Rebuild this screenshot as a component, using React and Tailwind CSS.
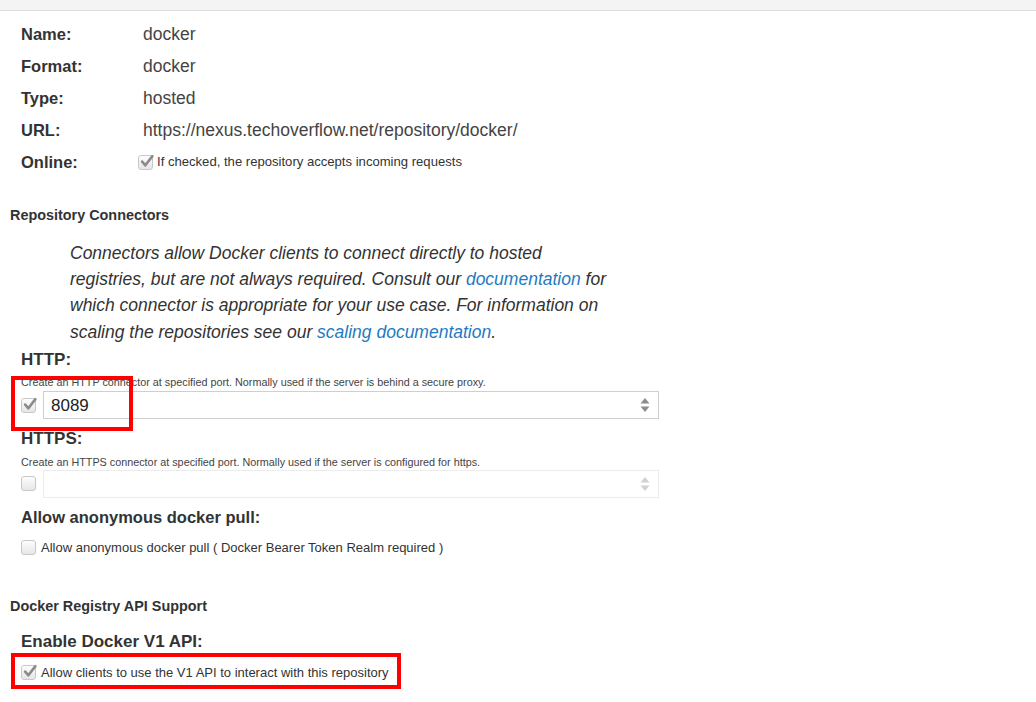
import React from "react";

const font = { fontFamily: '"Liberation Sans", Arial, sans-serif' };

function Check({ checked, faded }) {
  return (
    <span
      className={`relative inline-flex h-[15px] w-[15px] shrink-0 items-center justify-center rounded-[3px] border border-[#c8c8c8] bg-gradient-to-b from-[#fdfdfd] to-[#e6e6e6] ${faded ? "opacity-80" : ""}`}
    >
      {checked && (
        <svg width="14" height="14" viewBox="0 0 13 13" className="absolute left-[1px] top-[-2px]">
          <path d="M2 7 L5 10.5 L11.5 2" fill="none" stroke="#8a8a8a" strokeWidth="2.4" strokeLinecap="round" strokeLinejoin="round" />
        </svg>
      )}
    </span>
  );
}

function Spinner({ faded }) {
  return (
    <svg width="10" height="16" viewBox="0 0 10 16" className={faded ? "opacity-40" : ""}>
      <path d="M5 1 L9.5 6.5 L0.5 6.5 Z" fill="#8d8d8d" />
      <path d="M5 15 L9.5 9.5 L0.5 9.5 Z" fill="#8d8d8d" />
    </svg>
  );
}

function Row({ label, children }) {
  return (
    <div className="flex h-[32px] items-center">
      <div className="w-[122px] text-[16.5px] font-bold text-[#333]">{label}</div>
      <div className="text-[17.5px] text-[#444]">{children}</div>
    </div>
  );
}

export default function App() {
  return (
    <div className="h-[702px] w-[1036px] overflow-hidden bg-white" style={font}>
      <div className="h-[11px] border-b border-[#dcdcdc] bg-[#f4f4f4]" />
      <div className="relative">
        <div className="pl-[21px] pt-[7px]">
          <Row label="Name:">docker</Row>
          <Row label="Format:">docker</Row>
          <Row label="Type:">hosted</Row>
          <Row label="URL:">https://nexus.techoverflow.net/repository/docker/</Row>
          <div className="flex h-[32px] items-center">
            <div className="w-[117px] text-[16.5px] font-bold text-[#333]">Online:</div>
            <Check checked />
            <span className="ml-[4px] text-[13.1px] text-[#333]">If checked, the repository accepts incoming requests</span>
          </div>
        </div>

        <div className="mt-[27px] pl-[10px] text-[14.4px] font-bold text-[#333]">Repository Connectors</div>

        <p className="mt-[13px] pl-[70px] text-[17.5px] italic leading-[26.3px] text-[#333]">
          Connectors allow Docker clients to connect directly to hosted
          <br />
          registries, but are not always required. Consult our{" "}
          <span className="text-[#1f7ac1]">documentation</span> for
          <br />
          which connector is appropriate for your use case. For information on
          <br />
          scaling the repositories see our <span className="text-[#1f7ac1]">scaling documentation</span>.
        </p>

        <div className="pl-[21px]">
          <div className="mt-[2px] text-[17px] font-bold text-[#333]">HTTP:</div>
          <div className="mt-[3px] text-[10.8px] leading-[14px] text-[#444]">
            Create an HTTP connector at specified port. Normally used if the server is behind a secure proxy.
          </div>
          <div className="mt-[2px] flex items-center">
            <Check checked />
            <div className="ml-[7px] flex h-[28px] w-[616px] items-center justify-between border border-[#cfcfcf] pl-[7px] pr-[8px]">
              <span className="text-[17px] text-[#222]">8089</span>
              <Spinner />
            </div>
          </div>

          <div className="mt-[7px] text-[17px] font-bold text-[#333]">HTTPS:</div>
          <div className="mt-[3px] text-[10.8px] leading-[14px] text-[#444]">
            Create an HTTPS connector at specified port. Normally used if the server is configured for https.
          </div>
          <div className="mt-[1px] flex items-center">
            <Check />
            <div className="ml-[7px] flex h-[28px] w-[616px] items-center justify-end border border-[#ececec] pr-[8px]">
              <Spinner faded />
            </div>
          </div>

          <div className="mt-[7px] text-[16.5px] font-bold text-[#333]">Allow anonymous docker pull:</div>
          <div className="mt-[8px] flex items-center">
            <Check />
            <span className="ml-[5px] text-[13px] text-[#333]">Allow anonymous docker pull ( Docker Bearer Token Realm required )</span>
          </div>
        </div>

        <div className="mt-[39px] pl-[10px] text-[14.4px] font-bold text-[#333]">Docker Registry API Support</div>

        <div className="pl-[21px]">
          <div className="mt-[11px] text-[17px] font-bold text-[#333]">Enable Docker V1 API:</div>
          <div className="mt-[9px] flex items-center">
            <Check checked />
            <span className="ml-[5px] text-[13px] text-[#333]">Allow clients to use the V1 API to interact with this repository</span>
          </div>
        </div>

        <div className="pointer-events-none absolute left-[11px] top-[365px] h-[55px] w-[122px] border-[4px] border-[#ff0000]" />
        <div className="pointer-events-none absolute left-[11px] top-[642px] h-[36px] w-[390px] border-[4px] border-[#ff0000]" />
      </div>
    </div>
  );
}
